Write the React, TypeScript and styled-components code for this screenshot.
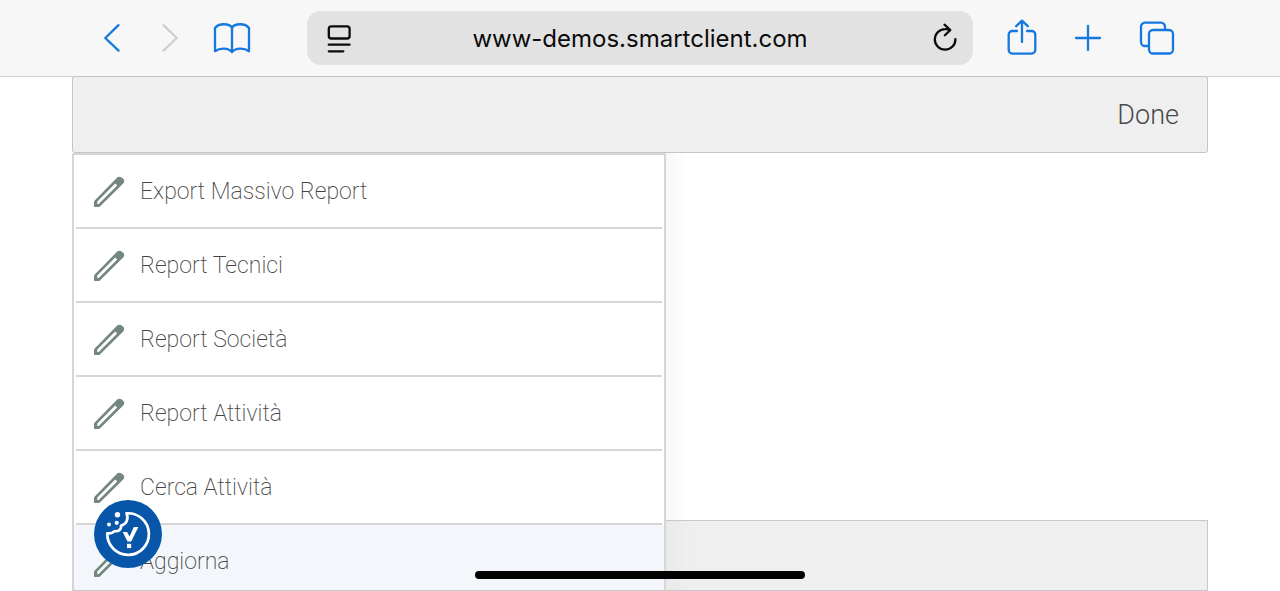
import React from "react";
import styled, { createGlobalStyle } from "styled-components";

const GlobalStyle = createGlobalStyle`
  *, *::before, *::after { box-sizing: border-box; }
  body { margin: 0; background: #fff; font-family: Roboto, "Open Sans", sans-serif; }
  button { font: inherit; color: inherit; background: none; border: 0; padding: 0; margin: 0; }
`;

const Page = styled.div`
  position: relative;
  display: flex;
  flex-direction: column;
  height: 100vh;
  overflow: hidden;
`;

const BrowserBar = styled.header`
  display: flex;
  align-items: center;
  flex: none;
  gap: 34px;
  height: 76px;
  padding: 0 105px 0 104px;
  background: #f7f7f7;
  box-shadow: 0 1px 0 #d2d2d2;
`;

const BarGroup = styled.nav<{ $gap: number }>`
  display: flex;
  align-items: center;
  gap: ${(p) => p.$gap}px;
`;

const BarButton = styled.button<{ $muted?: boolean }>`
  display: flex;
  color: ${(p) => (p.$muted ? "#cfcfcf" : "#1478e0")};
`;

const AddressBar = styled.form`
  display: flex;
  align-items: center;
  flex: 1;
  min-width: 0;
  height: 54px;
  margin: 0 0 0 22px;
  padding: 0 12px 0 16px;
  border-radius: 14px;
  background: #e2e2e2;
  color: #0b0b0b;
`;

const AddressButton = styled.button`
  display: flex;
`;

const AddressInput = styled.input`
  flex: 1;
  min-width: 0;
  border: 0;
  padding: 2px 4px 0 0;
  outline: 0;
  background: none;
  color: inherit;
  font: 400 24px/32px Inter, "Liberation Sans", sans-serif;
  text-align: center;
`;

const AppShell = styled.main`
  position: relative;
  display: flex;
  flex-direction: column;
  flex: 1;
  min-height: 0;
  margin: 0 72px;
`;

const TitleBar = styled.div`
  display: flex;
  align-items: center;
  justify-content: flex-end;
  flex: none;
  height: 77px;
  padding: 0 28px;
  border: 1px solid #c4c6c5;
  border-radius: 3px;
  background: #efefef;
`;

const DoneButton = styled.button`
  color: #4a4a4a;
  font-size: 27px;
  font-weight: 300;
  line-height: 32px;
`;

const Workspace = styled.div`
  display: flex;
  flex: 1;
  min-height: 0;
`;

const Menu = styled.ul`
  position: relative;
  width: 594px;
  margin: 0;
  padding: 0 2px;
  overflow: hidden;
  list-style: none;
  border: 2px solid #d6d6d6;
  border-bottom: 1px solid #c8c8c8;
  border-radius: 2px 2px 0 0;
  background: #fff;
`;

const MenuRow = styled.li<{ $active?: boolean }>`
  height: 74px;
  margin: 0 ${(p) => (p.$active ? "-2px" : "0")};
  padding: 0 ${(p) => (p.$active ? "2px" : "0")};
  background: ${(p) => (p.$active ? "#f3f7fb" : "#fff")};
`;

const MenuButton = styled.button`
  display: flex;
  align-items: center;
  gap: 15px;
  width: 100%;
  height: 100%;
  padding: 2px 17px 0;
  border-bottom: 2px solid #d6d6d6;
  color: #444;
  font-size: 23px;
  font-weight: 200;
  line-height: 32px;
  text-align: left;
`;

const Detail = styled.section`
  display: flex;
  flex-direction: column;
  justify-content: flex-end;
  flex: 1;
  background: linear-gradient(to right, #f8f8f8, #fff 24px);
`;

const DetailFooter = styled.footer`
  height: 71px;
  border: 1px solid #c8c8c8;
  border-left: 0;
  background: linear-gradient(to right, #e9e9e9, #efefef 24px);
`;

const CookieButton = styled.button`
  position: absolute;
  left: 94px;
  bottom: 23px;
  width: 68px;
  height: 68px;
  border-radius: 50%;
  background: #0756a9;
`;

const HomeIndicator = styled.div`
  position: absolute;
  left: 50%;
  bottom: 12px;
  width: 330px;
  height: 8px;
  margin-left: -165px;
  border-radius: 4px;
  background: #000;
`;

const stroke = {
  fill: "none",
  stroke: "currentColor",
  strokeWidth: 2.3,
  strokeLinecap: "round" as const,
  strokeLinejoin: "round" as const,
};

const BackIcon = () => (
  <svg width="16" height="28" viewBox="0 0 16 28" {...stroke}>
    <path d="M14.5 1.2 1.3 14l13.2 12.6" />
  </svg>
);

const ForwardIcon = () => (
  <svg width="25" height="28" viewBox="0 0 25 28" {...stroke}>
    <path d="M9.5 1.2 22.7 14 9.5 26.6" />
  </svg>
);

const BookIcon = () => (
  <svg width="38" height="32" viewBox="0 0 38 32" {...stroke}>
    <path d="M19 5.5C16 1.2 6 1 2 6v23.2c5-3.6 13-3.6 17 .8 4-4.400 12-4.400 17-.8V6C32 1 22 1.200 19 5.500Z" />
    <path d="M19 5.500V30" />
  </svg>
);

const ReaderIcon = () => (
  <svg width="32" height="30" viewBox="0 0 32 30" {...stroke}>
    <rect x="5.800" y="3.300" width="20.800" height="12.200" rx="2.600" />
    <path d="M5.800 21.700h20.800M5.800 28.300h14.500" />
  </svg>
);

const ReloadIcon = () => (
  <svg width="32" height="32" viewBox="0 0 32 32" {...stroke}>
    <path d="M26.400 17.200A10.300 10.300 0 1 1 16 7.100Q18.500 6.900 21 8" />
    <path d="M15.500 2.700 21.300 8l-5.400 5.300" />
  </svg>
);

const ShareIcon = () => (
  <svg width="30" height="38" viewBox="0 0 30 38" {...stroke}>
    <path d="M10 12H5.300a3.600 3.600 0 0 0-3.600 3.600v15.400a3.600 3.600 0 0 0 3.600 3.600h19.400a3.600 3.600 0 0 0 3.600-3.600V15.600A3.600 3.600 0 0 0 24.700 12H20" />
    <path d="M15 23V2M9.200 7.200 15 1.600l5.800 5.600" />
  </svg>
);

const PlusIcon = () => (
  <svg width="28" height="28" viewBox="0 0 28 28" {...stroke}>
    <path d="M14 2v24M2 14h24" />
  </svg>
);

const TabsIcon = () => (
  <svg width="36" height="36" viewBox="0 0 36 36" {...stroke}>
    <path d="M9.500 26H6A4 4 0 0 1 2 22V6.700A4 4 0 0 1 6 2.700h16a4 4 0 0 1 4 4v3" />
    <rect x="10" y="10" width="24" height="23.500" rx="4" />
  </svg>
);

const PencilIcon = () => (
  <svg width="32" height="32" viewBox="0 0 32 32">
    <path
      fill="#73877f"
      fillRule="evenodd"
      d="M24.200 1.600Q26-.1 28.400 1.200L30.700 3.200Q32 5.500 30.200 7.500L6.900 30.400Q6.100 31.100 5 31.100H1.700Q1 31.100 1 30.300V26.400Q1 25.400 1.700 24.600ZM22.200 7.500 4.300 25.400V28H5.700L24.200 9.500Z"
    />
  </svg>
);

const CookieIcon = () => (
  <svg width="68" height="68" viewBox="0 0 68 68" aria-hidden="true">
    <path
      d="M32.500 13.300A20.800 20.800 0 1 1 13.300 33.300C16 33.600 18.800 33 20.500 31C24.500 32 27.500 29.500 27 25.500C32.500 24.800 35 18.500 32.500 13.300Z"
      fill="none"
      stroke="#fff"
      strokeWidth="2.700"
      strokeLinejoin="round"
    />
    <circle cx="23.500" cy="14.800" r="2.700" fill="#fff" />
    <circle cx="15" cy="24.500" r="2" fill="#fff" />
    <circle cx="22.700" cy="22.800" r="2.100" fill="#fff" />
    <path d="M28.700 32h4.400l2.400 4.600 4.400-9.600h4.500L37.200 41.500h-3.700Z" fill="#fff" />
    <rect x="33" y="43.800" width="4.200" height="4.300" fill="#fff" />
  </svg>
);

const entries = [
  "Export Massivo Report",
  "Report Tecnici",
  "Report Società",
  "Report Attività",
  "Cerca Attività",
  "Aggiorna",
];

export default function App() {
  return (
    <>
      <GlobalStyle />
      <Page>
        <BrowserBar>
          <BarGroup $gap={34}>
            <BarButton aria-label="Back"><BackIcon /></BarButton>
            <BarButton aria-label="Forward" $muted><ForwardIcon /></BarButton>
            <BarButton aria-label="Bookmarks"><BookIcon /></BarButton>
          </BarGroup>
          <AddressBar onSubmit={(e) => e.preventDefault()}>
            <AddressButton type="button" aria-label="Page menu"><ReaderIcon /></AddressButton>
            <AddressInput aria-label="Address" defaultValue="www-demos.smartclient.com" />
            <AddressButton type="submit" aria-label="Reload"><ReloadIcon /></AddressButton>
          </AddressBar>
          <BarGroup $gap={37}>
            <BarButton aria-label="Share"><ShareIcon /></BarButton>
            <BarButton aria-label="New tab"><PlusIcon /></BarButton>
            <BarButton aria-label="Tabs"><TabsIcon /></BarButton>
          </BarGroup>
        </BrowserBar>
        <AppShell>
          <TitleBar><DoneButton>Done</DoneButton></TitleBar>
          <Workspace>
            <Menu>
              {entries.map((label) => (
                <MenuRow key={label} $active={label === "Aggiorna"}>
                  <MenuButton><PencilIcon />{label}</MenuButton>
                </MenuRow>
              ))}
            </Menu>
            <Detail><DetailFooter /></Detail>
          </Workspace>
        </AppShell>
        <CookieButton aria-label="Cookie preferences"><CookieIcon /></CookieButton>
        <HomeIndicator />
      </Page>
    </>
  );
}
